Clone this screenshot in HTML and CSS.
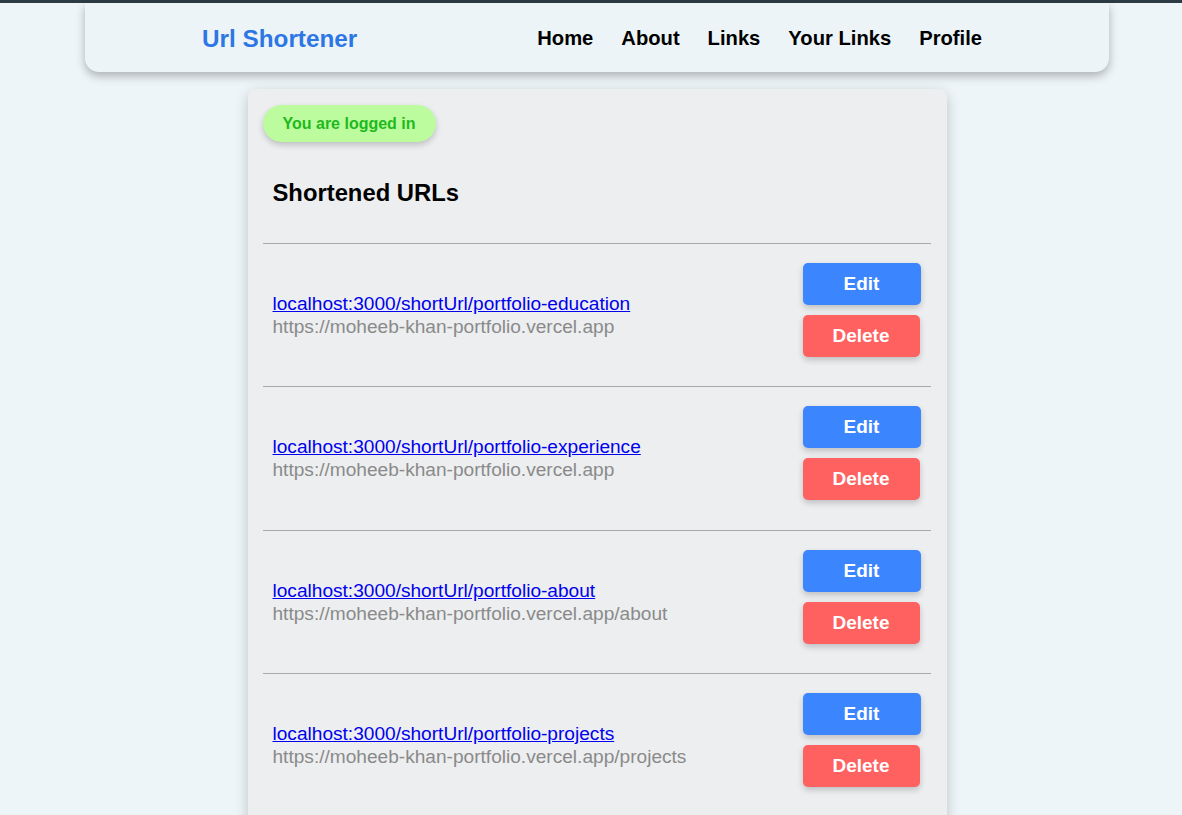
FILE: index.html
```html
<!DOCTYPE html>
<html>
<head>
<meta charset="utf-8">
<link rel="stylesheet" href="styles.css">
</head>
<body>
<div class="topbar"></div>
<div class="page">
  <header class="navbar">
    <div class="logo">Url Shortener</div>
    <nav class="nav">
      <a class="nav-link">Home</a>
      <a class="nav-link">About</a>
      <a class="nav-link">Links</a>
      <a class="nav-link">Your Links</a>
      <a class="nav-link">Profile</a>
    </nav>
  </header>
  <main class="card">
    <div class="badge">You are logged in</div>
    <h2 class="title">Shortened URLs</h2>
    <ul class="list">
      <li class="row">
        <div class="urls">
          <a class="short" href="#">localhost:3000/shortUrl/portfolio-education</a>
          <div class="orig">https://moheeb-khan-portfolio.vercel.app</div>
        </div>
        <div class="actions">
          <button class="btn edit">Edit</button>
          <button class="btn delete">Delete</button>
        </div>
      </li>
      <li class="row">
        <div class="urls">
          <a class="short" href="#">localhost:3000/shortUrl/portfolio-experience</a>
          <div class="orig">https://moheeb-khan-portfolio.vercel.app</div>
        </div>
        <div class="actions">
          <button class="btn edit">Edit</button>
          <button class="btn delete">Delete</button>
        </div>
      </li>
      <li class="row">
        <div class="urls">
          <a class="short" href="#">localhost:3000/shortUrl/portfolio-about</a>
          <div class="orig">https://moheeb-khan-portfolio.vercel.app/about</div>
        </div>
        <div class="actions">
          <button class="btn edit">Edit</button>
          <button class="btn delete">Delete</button>
        </div>
      </li>
      <li class="row">
        <div class="urls">
          <a class="short" href="#">localhost:3000/shortUrl/portfolio-projects</a>
          <div class="orig">https://moheeb-khan-portfolio.vercel.app/projects</div>
        </div>
        <div class="actions">
          <button class="btn edit">Edit</button>
          <button class="btn delete">Delete</button>
        </div>
      </li>
    </ul>
  </main>
</div>
</body>
</html>
```

FILE: styles.css
```css
* { box-sizing: border-box; }
html, body {
  margin: 0;
  padding: 0;
  height: 100%;
  overflow: hidden;
}
body {
  background: #edf5f8;
  font-family: "Liberation Sans", Arial, sans-serif;
}
.topbar {
  height: 3px;
  background: #2d3b45;
}
.page {
  padding-left: 12px;
  display: flex;
  flex-direction: column;
  align-items: center;
}
.navbar {
  width: 1024px;
  height: 69px;
  background: #ecf4f7;
  border-radius: 0 0 14px 14px;
  box-shadow: 0 4px 10px rgba(0, 0, 0, 0.28);
  display: flex;
  align-items: center;
  justify-content: space-between;
  padding: 0 127px 0 117px;
}
.logo {
  color: #2d76e5;
  font-weight: bold;
  font-size: 24.3px;
  margin-top: 2px;
}
.nav {
  display: flex;
  gap: 28px;
  margin-top: 2px;
}
.nav-link {
  color: #000;
  font-weight: bold;
  font-size: 20.2px;
  text-decoration: none;
}
.card {
  width: 699px;
  margin-top: 17px;
  background: #edeef0;
  border-radius: 8px;
  box-shadow: 0 4px 14px rgba(0, 0, 0, 0.2);
  padding: 16px 16px 40px 15px;
}
.badge {
  display: inline-block;
  background: #bdfc9e;
  color: #1db91d;
  font-weight: bold;
  font-size: 16px;
  line-height: 19px;
  padding: 9px 20px;
  border-radius: 20px;
  box-shadow: 0 3px 6px rgba(0, 0, 0, 0.2);
}
.title {
  margin: 37px 0 36px 10px;
  font-size: 23.8px;
  line-height: 28px;
  font-weight: bold;
  color: #000;
}
.list {
  list-style: none;
  margin: 0;
  padding: 0;
}
.row {
  border-top: 1px solid #aaa;
  min-height: 143.3px;
  padding: 0 10px;
  display: flex;
  justify-content: space-between;
  align-items: center;
}
.urls {
  display: flex;
  flex-direction: column;
  font-size: 19.1px;
  line-height: 23px;
}
.short {
  color: #0000ee;
  text-decoration: underline;
}
.orig {
  color: #8a8a8a;
}
.actions {
  align-self: flex-start;
  margin-top: 19px;
  display: flex;
  flex-direction: column;
  gap: 10px;
}
.btn {
  border: none;
  color: #fff;
  font-family: "Liberation Sans", Arial, sans-serif;
  font-weight: bold;
  font-size: 19px;
  height: 42px;
  border-radius: 5px;
  box-shadow: 0 3px 6px rgba(0, 0, 0, 0.2);
  cursor: pointer;
}
.edit {
  width: 118px;
  background: #3b86ff;
}
.delete {
  width: 117px;
  background: #ff6161;
}
```
